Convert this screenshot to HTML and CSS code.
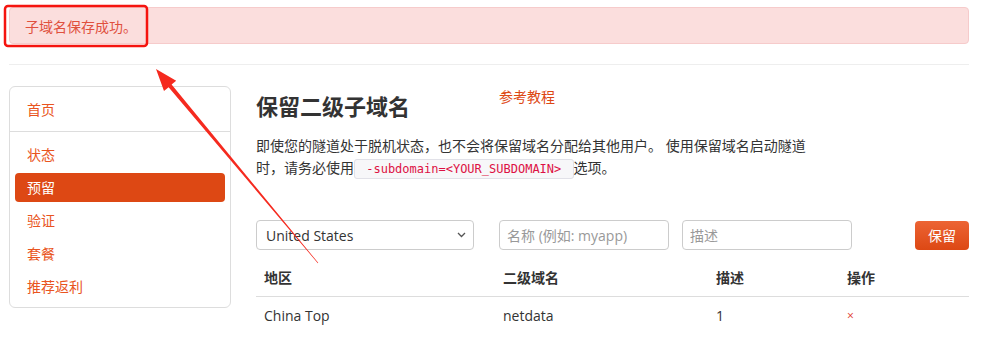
FILE: index.html
```html
<!DOCTYPE html>
<html lang="zh-CN">
<head>
  <meta charset="UTF-8">
  <meta name="viewport" content="width=device-width, initial-scale=1.0">
  <title>保留二级子域名</title>
  <link rel="stylesheet" href="styles.css">
</head>
<body>
  <div class="page">
    <div class="alert">子域名保存成功。</div>
    <hr class="divider">

    <div class="layout">
      <aside class="sidebar">
        <ul class="nav-group">
          <li><a href="#">首页</a></li>
        </ul>
        <ul class="nav-group">
          <li><a href="#">状态</a></li>
          <li class="active"><a href="#">预留</a></li>
          <li><a href="#">验证</a></li>
          <li><a href="#">套餐</a></li>
          <li><a href="#">推荐返利</a></li>
        </ul>
      </aside>

      <main class="content">
        <div class="title-row">
          <h2>保留二级子域名</h2>
          <a class="tutorial" href="#">参考教程</a>
        </div>
        <p class="intro">即使您的隧道处于脱机状态，也不会将保留域名分配给其他用户。 使用保留域名启动隧道时，请务必使用<code> -subdomain=&lt;YOUR_SUBDOMAIN&gt; </code>选项。</p>

        <form class="reserve-form">
          <div class="select-wrap">
            <select class="region">
              <option>United States</option>
            </select>
            <svg class="chevron" width="9" height="6" viewBox="0 0 9 6">
              <path d="M1 1l3.5 3.5L8 1" fill="none" stroke="#555" stroke-width="1.3"/>
            </svg>
          </div>
          <input class="field name" type="text" placeholder="名称 (例如: myapp)">
          <input class="field desc" type="text" placeholder="描述">
          <button type="submit">保留</button>
        </form>

        <table class="domains">
          <thead>
            <tr>
              <th class="col-region">地区</th>
              <th class="col-name">二级域名</th>
              <th class="col-desc">描述</th>
              <th>操作</th>
            </tr>
          </thead>
          <tbody>
            <tr>
              <td>China Top</td>
              <td>netdata</td>
              <td>1</td>
              <td><a class="remove" href="#">×</a></td>
            </tr>
          </tbody>
        </table>
      </main>
    </div>
  </div>

  <!-- screenshot annotation -->
  <svg class="annotation" width="983" height="347" viewBox="0 0 983 347">
    <rect x="5" y="6" width="142" height="40" rx="3" fill="none" stroke="#f5140f" stroke-width="2.5"/>
    <polygon fill="#f52a1f" points="156,69 176.2,80.8 171.6,84.6 318.2,262.8 317.8,263.2 168.6,87.2 164,91"/>
  </svg>
</body>
</html>
```

FILE: styles.css
```css
* {
  margin: 0;
  padding: 0;
  box-sizing: border-box;
}

body {
  background-color: #fff;
  color: #333;
  font-family: 'Open Sans', 'Noto Sans CJK SC', sans-serif;
  font-size: 14px;
  line-height: 20px;
}

a {
  color: #e95420;
  text-decoration: none;
}

.page {
  width: 960px;
  margin-left: 9px;
  padding-top: 7px;
}

.alert {
  height: 37px;
  padding: 0 15px;
  line-height: 37px;
  background-color: #fbdedd;
  border: 1px solid #f6cbcb;
  border-radius: 4px;
  color: #e0503d;
}

.divider {
  margin-top: 20px;
  border: none;
  border-top: 1px solid #eee;
}

.layout {
  display: flex;
  gap: 25px;
  margin-top: 21px;
}

.sidebar {
  width: 222px;
  flex-shrink: 0;
  align-self: flex-start;
  border: 1px solid #ddd;
  border-radius: 6px;
}

.nav-group {
  list-style: none;
  display: flex;
  flex-direction: column;
  gap: 4px;
  padding: 8px 5px 7px;
}

.nav-group + .nav-group {
  border-top: 1px solid #ddd;
  padding-top: 8px;
  padding-bottom: 6px;
}

.nav-group a {
  display: block;
  height: 29px;
  line-height: 29px;
  padding: 0 12px;
  border-radius: 4px;
}

.nav-group .active a {
  background-color: #dd4814;
  color: #fff;
}

.content {
  flex: 1;
}

.title-row {
  display: flex;
  align-items: flex-start;
}

.title-row h2 {
  width: 243px;
  margin-top: 5px;
  font-size: 22px;
  line-height: 30px;
  font-weight: bold;
  color: #333;
}

.tutorial {
  margin-top: 1px;
  color: #dd4814;
}

.intro {
  width: 560px;
  margin-top: 14px;
  line-height: 22px;
}

.intro code {
  font-family: 'DejaVu Sans Mono', monospace;
  font-size: 12px;
  white-space: pre;
  padding: 2px 4px;
  color: #dd1144;
  background-color: #f7f7f9;
  border: 1px solid #e1e1e8;
  border-radius: 3px;
}

.reserve-form {
  display: flex;
  align-items: center;
  margin-top: 40px;
  margin-bottom: 10px;
}

.select-wrap {
  position: relative;
  width: 218px;
}

.region,
.field {
  height: 30px;
  border: 1px solid #ccc;
  border-radius: 4px;
  font-family: inherit;
  color: #333;
  background-color: #fff;
}

.region {
  width: 100%;
  padding: 0 9px;
  font-size: 14px;
  appearance: none;
  -webkit-appearance: none;
}

.chevron {
  position: absolute;
  right: 8px;
  top: 12px;
  pointer-events: none;
}

.field {
  width: 170px;
  padding: 0 7px;
  font-size: 14px;
}

.field::placeholder {
  color: #999;
}

.name {
  margin-left: 25px;
}

.desc {
  margin-left: 13px;
}

.reserve-form button {
  margin-left: auto;
  width: 54px;
  height: 29px;
  border: none;
  border-radius: 4px;
  background: linear-gradient(to bottom, #ec6434, #dd4814);
  color: #fff;
  font-family: inherit;
  font-size: 14px;
  cursor: pointer;
}

.domains {
  width: 100%;
  border-collapse: collapse;
}

.domains th,
.domains td {
  text-align: left;
  padding: 8px;
  line-height: 20px;
}

.domains th {
  font-weight: bold;
  border-bottom: 1px solid #ddd;
}

.col-region {
  width: 239px;
}

.col-name {
  width: 213px;
}

.col-desc {
  width: 131px;
}

.remove {
  color: #df382c;
  font-size: 12px;
}

.annotation {
  position: absolute;
  top: 0;
  left: 0;
  pointer-events: none;
}
```
